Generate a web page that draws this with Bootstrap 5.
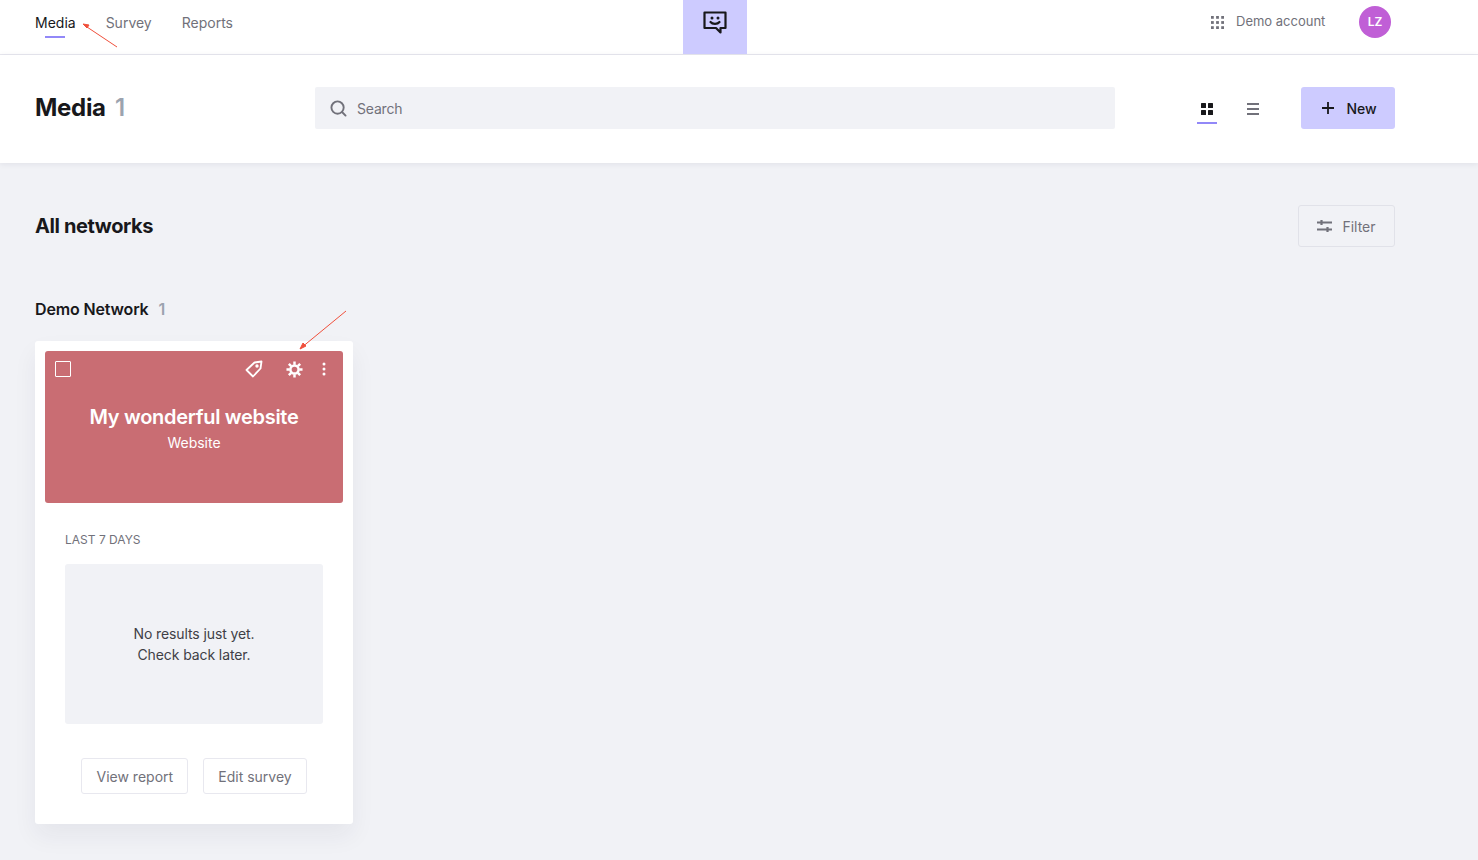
<!DOCTYPE html>
<html lang="en">
<head>
  <meta charset="UTF-8">
  <meta name="viewport" content="width=device-width, initial-scale=1.0">
  <title>Media</title>
  <link href="https://cdn.jsdelivr.net/npm/bootstrap@5.3.0/dist/css/bootstrap.min.css" rel="stylesheet">
  <style>
    body {
      background: #f1f2f6;
      font-family: Inter, "Liberation Sans", sans-serif;
      color: #18181b;
      min-height: 860px;
      position: relative;
      overflow: hidden;
    }
    .top-bar {
      height: 55px;
      background: #fff;
      border-bottom: 1px solid #e8e8ef;
      padding-left: 35px;
      padding-bottom: 10px;
    }
    .top-left { width: 648px; gap: 30px; }
    .top-link {
      font-size: 14px;
      color: #71717a;
      text-decoration: none;
      position: relative;
      line-height: 17px;
      margin-top: 1px;
    }
    .top-link.is-active { color: #18181b; }
    .top-link.is-active::after {
      content: "";
      position: absolute;
      left: 10px;
      width: 20px;
      height: 2px;
      bottom: -7px;
      background: #9288f8;
    }
    .logo-tile {
      width: 64px;
      height: 54px;
      background: #cdcbff;
      padding-top: 10px;
    }
    .account {
      margin-left: 464px;
      gap: 12px;
      font-size: 13px;
      color: #71717a;
      width: 148px;
    }
    .avatar {
      width: 32px;
      height: 32px;
      border-radius: 50%;
      background: #c05fd6;
      color: #fff;
      font-size: 12px;
      font-weight: 600;
    }
    .head-bar {
      height: 108px;
      background: #fff;
      padding-left: 35px;
      padding-bottom: 2px;
      box-shadow: 0 1px 6px rgba(30, 30, 60, .08);
    }
    .head-title {
      width: 280px;
      font-size: 24px;
      font-weight: 700;
      letter-spacing: -.3px;
      margin: 0;
    }
    .head-title span { color: #9ca3af; margin-left: 4px; font-weight: 600; }
    .search-box {
      width: 800px;
      height: 42px;
      background: #f1f2f6;
      border-radius: 2px;
      padding-left: 15px;
      gap: 10px;
      font-size: 14px;
      letter-spacing: -.2px;
      color: #71717a;
    }
    .view-btn {
      width: 20px;
      height: 32px;
      padding-top: 11px;
      position: relative;
    }
    .view-btn.is-active::after {
      content: "";
      position: absolute;
      left: 0;
      right: 0;
      bottom: 0;
      height: 2px;
      background: #9288f8;
    }
    .view-group { margin-left: 82px; gap: 26px; margin-top: 37px; }
    .new-btn {
      width: 94px;
      height: 42px;
      margin-left: 38px;
      padding: 0 0 0 2px;
      background: #cdcbff;
      border: 0;
      border-radius: 3px;
      font-size: 14px;
      font-weight: 500;
      color: #18181b;
      gap: 11px;
    }
    .page-body { padding: 42px 83px 0 35px; }
    .section-title { font-size: 20px; font-weight: 700; letter-spacing: -.4px; margin: 0; }
    .filter-btn {
      width: 97px;
      height: 42px;
      border: 1px solid #e1e2e9;
      border-radius: 3px;
      font-size: 14px;
      color: #71717a;
      gap: 10px;
    }
    .net-title {
      font-size: 16px;
      font-weight: 600;
      letter-spacing: -.15px;
      margin: 42px 0 0;
      line-height: 40px;
      height: 52px;
    }
    .net-title span { color: #9ca3af; margin-left: 6px; }
    .site-card {
      width: 318px;
      height: 483px;
      background: #fff;
      border-radius: 3px;
      padding: 10px;
      box-shadow: 0 12px 24px rgba(30, 30, 60, .06);
    }
    .site-banner {
      height: 152px;
      background: #c96d73;
      border-radius: 3px;
      color: #fff;
      padding: 9px 17px 0 10px;
    }
    .site-check { width: 16px; height: 16px; border: 1px solid #fff; border-radius: 1px; }
    .tool-tag { margin-right: 23px; }
    .tool-gear { margin-right: 19px; }
    .site-name { font-size: 20px; font-weight: 600; letter-spacing: -.3px; margin: 25px -7px 0 0; line-height: 28px; }
    .site-kind { font-size: 14px; margin: 2px -7px 0 0; line-height: 20px; }
    .stat-label { font-size: 12px; color: #71717a; margin: 29px 0 0 20px; line-height: 15px; }
    .empty-box {
      height: 160px;
      margin: 17px 20px 0;
      background: #f1f2f6;
      border-radius: 3px;
      font-size: 14px;
      line-height: 21px;
      letter-spacing: -.1px;
      color: #3f3f46;
    }
    .card-actions { gap: 15px; margin-top: 34px; }
    .plain-btn {
      height: 36px;
      padding: 0 14px;
      border: 1px solid #e8e8ef;
      border-radius: 3px;
      background: #fff;
      font-size: 14px;
      color: #71717a;
    }
    .report-btn { min-width: 107px; }
    .red-arrow { position: absolute; left: 0; top: 0; pointer-events: none; }
  </style>
</head>
<body>

<nav class="top-bar d-flex align-items-center">
  <div class="top-left d-flex align-items-center">
    <a class="top-link is-active" href="#">Media</a>
    <a class="top-link" href="#">Survey</a>
    <a class="top-link" href="#">Reports</a>
  </div>
  <div class="logo-tile d-flex justify-content-center align-self-start">
    <svg width="26" height="26" viewBox="0 0 26 26" fill="none" stroke="#18181b" stroke-width="2.200" stroke-linejoin="round">
      <path d="M2.500 2.500H23.500V18H18.500V22.500L14 18H2.500Z"/>
      <circle cx="10" cy="8" r="1.500" fill="#18181b" stroke="none"/>
      <circle cx="16" cy="8" r="1.500" fill="#18181b" stroke="none"/>
      <path d="M8.500 12C10.500 14.500 15.500 14.500 17.500 12" stroke-linecap="round"/>
    </svg>
  </div>
  <div class="account d-flex align-items-center">
    <svg width="13" height="13" viewBox="0 0 14 14" fill="#71717a">
      <rect x="0" y="0" width="3" height="3"/><rect x="5.500" y="0" width="3" height="3"/><rect x="11" y="0" width="3" height="3"/>
      <rect x="0" y="5.500" width="3" height="3"/><rect x="5.500" y="5.500" width="3" height="3"/><rect x="11" y="5.500" width="3" height="3"/>
      <rect x="0" y="11" width="3" height="3"/><rect x="5.500" y="11" width="3" height="3"/><rect x="11" y="11" width="3" height="3"/>
    </svg>
    <span>Demo account</span>
  </div>
  <div class="avatar d-flex align-items-center justify-content-center">LZ</div>
</nav>

<header class="head-bar d-flex align-items-center">
  <h1 class="head-title">Media <span>1</span></h1>
  <div class="search-box d-flex align-items-center">
    <svg width="17" height="17" viewBox="0 0 18 18" fill="none" stroke="#71717a" stroke-width="2" stroke-linecap="round">
      <circle cx="8" cy="8" r="6.500"/><path d="M13 13L16.500 16.500"/>
    </svg>
    <span>Search</span>
  </div>
  <div class="view-group d-flex align-self-start">
    <div class="view-btn is-active d-flex justify-content-center">
      <svg width="12" height="12" viewBox="0 0 12 12" fill="#18181b">
        <rect width="5" height="5" rx=".5"/><rect x="7" width="5" height="5" rx=".5"/>
        <rect y="7" width="5" height="5" rx=".5"/><rect x="7" y="7" width="5" height="5" rx=".5"/>
      </svg>
    </div>
    <div class="view-btn d-flex justify-content-center">
      <svg width="12" height="12" viewBox="0 0 12 12" stroke="#71717a" stroke-width="1.800">
        <path d="M0 1H12M0 6H12M0 11H12"/>
      </svg>
    </div>
  </div>
  <button class="new-btn d-flex align-items-center justify-content-center">
    <svg width="14" height="14" viewBox="0 0 14 14" stroke="#18181b" stroke-width="1.800"><path d="M7 1V13M1 7H13"/></svg>
    New
  </button>
</header>

<main class="page-body">
  <div class="d-flex justify-content-between align-items-center">
    <h2 class="section-title">All networks</h2>
    <div class="filter-btn d-flex align-items-center justify-content-center">
      <svg width="15" height="14" viewBox="0 0 15 14" stroke="#71717a" stroke-width="1.800" fill="none">
        <path d="M0 3.500H15M0 10.500H15"/><path d="M4.500 1V6M10.500 8V13" stroke-width="2.200"/>
      </svg>
      Filter
    </div>
  </div>

  <h3 class="net-title">Demo Network <span>1</span></h3>

  <div class="site-card">
    <div class="site-banner text-center">
      <div class="d-flex align-items-center">
        <div class="site-check me-auto"></div>
        <svg class="tool-tag" width="18" height="18" viewBox="0 0 18 18" fill="none" stroke="#fff" stroke-width="1.800" stroke-linejoin="round">
          <path d="M1.500 10L9.500 2.500L16.500 1.500L15.500 8.500L8 16.500Z"/><circle cx="12" cy="6" r=".8" fill="#fff"/>
        </svg>
        <svg class="tool-gear" width="17" height="17" viewBox="0 0 18 18" fill="none" stroke="#fff">
          <circle cx="9" cy="9" r="4.300" stroke-width="2.600"/>
          <path d="M9 .5V4M9 14V17.500M.5 9H4M14 9H17.500M3 3L5.500 5.500M12.500 12.500L15 15M15 3L12.500 5.500M5.500 12.500L3 15" stroke-width="2.600"/>
        </svg>
        <svg width="4" height="14" viewBox="0 0 4 14" fill="#fff">
          <circle cx="2" cy="2" r="1.500"/><circle cx="2" cy="7" r="1.500"/><circle cx="2" cy="12" r="1.500"/>
        </svg>
      </div>
      <p class="site-name">My wonderful website</p>
      <div class="site-kind">Website</div>
    </div>
    <div class="stat-label">LAST 7 DAYS</div>
    <div class="empty-box d-flex align-items-center justify-content-center text-center">
      <div>No results just yet.<br>Check back later.</div>
    </div>
    <div class="card-actions d-flex justify-content-center">
      <button class="plain-btn report-btn">View report</button>
      <button class="plain-btn">Edit survey</button>
    </div>
  </div>
</main>

<svg class="red-arrow" width="400" height="400" fill="none" stroke="#f0503c" stroke-width="1">
  <path d="M117 47L84 25"/><path d="M83 24L89 25L87 28Z" fill="#f0503c"/>
  <path d="M346 311L301 348"/><path d="M300 349L303 343L306 346Z" fill="#f0503c"/>
</svg>

</body>
</html>
